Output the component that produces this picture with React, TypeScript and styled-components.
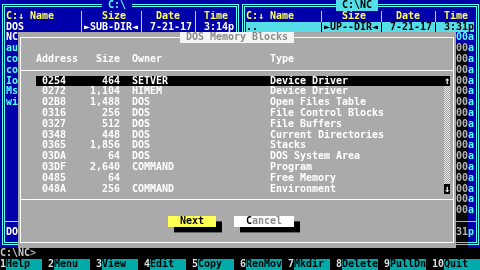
import styled, { createGlobalStyle, css } from 'styled-components'

// text-mode palette
const BLUE = '#0000aa'
const CYAN = '#55ffff'
const WHITE = '#ffffff'
const YELLOW = '#ffff55'
const GRAY = '#aaaaaa'
const CURSOR = '#55dde8'
const TEAL = '#00aaaa'

const GlobalStyle = createGlobalStyle`
  html, body {
    margin: 0;
    padding: 0;
    background: #000;
  }
  #root {
    width: 480px;
    height: 270px;
    overflow: hidden;
  }
`

const Screen = styled.main`
  position: relative;
  width: 480px;
  height: 270px;
  display: grid;
  grid-template-rows: 248.4px 10.8px 10.8px;
  background: #000;
  color: #c8c8c8;
  font: bold 10px/10.8px "DejaVu Sans Mono", "Liberation Mono", monospace;
  letter-spacing: -0.02px;
  white-space: pre;
`

const Panels = styled.div`
  display: flex;
`

const Panel = styled.section`
  position: relative;
  width: 240px;
  box-sizing: border-box;
  padding: 0 6px 10.8px;
  display: flex;
  flex-direction: column;
  background: ${BLUE};
  color: ${CYAN};

  &::before {
    content: '';
    position: absolute;
    inset: 3.9px 1.5px;
    border: 3px double ${CYAN};
  }
`

const PanelTitle = styled.div<{ $active?: boolean }>`
  position: relative;
  align-self: center;
  margin-right: 6px;
  height: 10.8px;
  background: ${p => (p.$active ? CURSOR : BLUE)};
  color: ${p => (p.$active ? '#000' : CYAN)};
`

const dividers = (c: string) =>
  [75, 135, 189].map(x => `linear-gradient(${c}, ${c}) ${x}px 0 / 1px 100% no-repeat`).join(', ')

const FileList = styled.div`
  background: ${dividers(CYAN)};
`

const FileRow = styled.div<{ $cursor?: boolean; $dir?: boolean }>`
  display: grid;
  grid-template-columns: 72px 54px 48px 36px;
  column-gap: 6px;
  height: 10.8px;
  color: ${p => (p.$dir ? WHITE : CYAN)};

  ${p =>
    p.$cursor &&
    css`
      color: #000;
      background: ${dividers('#000')}, ${CURSOR};
    `}
`

const HeadRow = styled(FileRow)`
  color: ${YELLOW};
`

const Cell = styled.span<{ $right?: boolean }>`
  overflow: hidden;
  text-align: ${p => (p.$right ? 'right' : 'left')};
`

const PanelSep = styled.div`
  height: 10.8px;
  margin: 0 -2px;
  background: linear-gradient(${CYAN}, ${CYAN}) 0 5px / 100% 1px no-repeat;
`

const CommandLine = styled.div`
  color: #c8c8c8;
`

const KeyBar = styled.div`
  display: flex;
`

const Key = styled.div<{ $last?: boolean }>`
  display: flex;
  width: 48px;
  box-sizing: border-box;
  padding-right: ${p => (p.$last ? 0 : 6)}px;
`

const KeyNum = styled.span`
  flex: 1;
  color: #dddddd;
`

const KeyLabel = styled.span`
  width: 36px;
  background: ${TEAL};
  color: #000;
`

// dialog box
const DialogShade = styled.div`
  position: absolute;
  left: 30px;
  top: 43.2px;
  width: 438px;
  height: 216px;
  backdrop-filter: grayscale(1) brightness(0.8);
`

const Dialog = styled.div`
  position: absolute;
  left: 18px;
  top: 32.4px;
  width: 438px;
  height: 216px;
  display: flex;
  flex-direction: column;
  background: ${GRAY};
  color: ${WHITE};

  &::before {
    content: '';
    position: absolute;
    inset: 5px 2px;
    border: 1px solid ${WHITE};
  }
`

const DialogTitleRow = styled.div`
  position: relative;
  height: 10.8px;
  display: flex;
  justify-content: center;
`

const DialogTitle = styled.span`
  background: #f4f4f4;
  color: #8c8c8c;
`

const Blank = styled.div`
  height: 10.8px;
`

const HLine = styled.div`
  height: 10.8px;
  margin: 0 2px;
  background: linear-gradient(${WHITE}, ${WHITE}) 0 5px / 100% 1px no-repeat;
`

const ListGrid = styled.div<{ $selected?: boolean }>`
  display: grid;
  grid-template-columns: 30px 54px 12px 138px 174px;
  height: 10.8px;
  background: ${p => (p.$selected ? '#000' : 'transparent')};
`

const HeadGrid = styled.div`
  display: grid;
  grid-template-columns: 42px 42px 12px 138px 174px;
  height: 10.8px;
  margin-left: 18px;
`

const Addr = styled.span`
  padding-left: 6px;
  overflow: hidden;
`

const ListArea = styled.div`
  display: flex;
  padding-left: 18px;
`

const ListBody = styled.div`
  width: 408px;
`

const ScrollBar = styled.div`
  width: 6px;
  display: flex;
  flex-direction: column;
`

const ScrollArrow = styled.div`
  height: 10.8px;
  background: #000;
  color: ${WHITE};
  text-align: center;
`

const ScrollTrack = styled.div`
  flex: 1;
  background: repeating-conic-gradient(#eeeeee 0 25%, #9a9a9a 0 50%) 0 0 / 2px 2px;
`

const ButtonRow = styled.div`
  display: flex;
  gap: 18px;
  height: 10.8px;
  padding-left: 150px;
`

const Button = styled.div<{ $primary?: boolean }>`
  width: ${p => (p.$primary ? 48 : 60)}px;
  text-align: center;
  background: ${p => (p.$primary ? YELLOW : WHITE)};
  color: #000;
  box-shadow: 6px 5.4px 0 #000;
`

const Dim = styled.span`
  color: #8a8a8a;
`

type FileEntry = { name?: string; size?: string; date?: string; time?: string; dir?: boolean }

// only what shows around the dialog is filled in
const leftFiles: FileEntry[] = [
  { name: 'DOS', size: '►SUB-DIR◄', date: '7-21-17', time: '3:14p', dir: true },
  { name: 'NC', dir: true },
  { name: 'au' },
  { name: 'co' },
  { name: 'co' },
  { name: 'Io' },
  { name: 'Ms' },
  { name: 'wi' },
]

const rightFiles: FileEntry[] = [
  { name: '..', size: '►UP--DIR◄', date: '7-21-17', time: '3:31p' },
  ...Array.from({ length: 17 }, () => ({ time: '00a' })),
]

const blocks = [
  ['0254', '464', 'SETVER', 'Device Driver'],
  ['0272', '1,104', 'HIMEM', 'Device Driver'],
  ['02B8', '1,488', 'DOS', 'Open Files Table'],
  ['0316', '256', 'DOS', 'File Control Blocks'],
  ['0327', '512', 'DOS', 'File Buffers'],
  ['0348', '448', 'DOS', 'Current Directories'],
  ['0365', '1,856', 'DOS', 'Stacks'],
  ['03DA', '64', 'DOS', 'DOS System Area'],
  ['03DF', '2,640', 'COMMAND', 'Program'],
  ['0485', '64', '', 'Free Memory'],
  ['048A', '256', 'COMMAND', 'Environment'],
]

const keys = ['Help', 'Menu', 'View', 'Edit', 'Copy', 'RenMov', 'Mkdir', 'Delete', 'PullDn', 'Quit']

const FilePanel = ({ title, files, active }: { title: string; files: FileEntry[]; active?: boolean }) => {
  const rows = Array.from({ length: 18 }, (_, i) => files[i])
  const current = files[0]
  return (
    <Panel>
      <PanelTitle $active={active}>{` ${title} `}</PanelTitle>
      <FileList>
        <HeadRow>
          <Cell>C:↓ Name</Cell>
          <Cell>   Size</Cell>
          <Cell>  Date</Cell>
          <Cell> Time</Cell>
        </HeadRow>
        {rows.map((f, i) => (
          <FileRow key={i} $dir={f?.dir} $cursor={active && i === 0}>
            <Cell>{f?.name}</Cell>
            <Cell $right>{f?.size}</Cell>
            <Cell $right>{f?.date}</Cell>
            <Cell $right>{f?.time}</Cell>
          </FileRow>
        ))}
      </FileList>
      <PanelSep />
      <FileRow $dir={current.dir}>
        <Cell>{current.name}</Cell>
        <Cell $right>{current.size}</Cell>
        <Cell $right>{current.date}</Cell>
        <Cell $right>{current.time}</Cell>
      </FileRow>
    </Panel>
  )
}

export default function App() {
  return (
    <Screen>
      <GlobalStyle />
      <Panels>
        <FilePanel title="C:\" files={leftFiles} />
        <FilePanel title="C:\NC" files={rightFiles} active />
      </Panels>
      <CommandLine>C:\NC&gt;</CommandLine>
      <KeyBar>
        {keys.map((k, i) => (
          <Key key={k} $last={i === keys.length - 1}>
            <KeyNum>{i + 1}</KeyNum>
            <KeyLabel>{k}</KeyLabel>
          </Key>
        ))}
      </KeyBar>

      <DialogShade />
      <Dialog>
        <DialogTitleRow>
          <DialogTitle> DOS Memory Blocks </DialogTitle>
        </DialogTitleRow>
        <Blank />
        <HeadGrid>
          <Cell>Address</Cell>
          <Cell $right>Size</Cell>
          <span />
          <Cell>Owner</Cell>
          <Cell>Type</Cell>
        </HeadGrid>
        <HLine />
        <ListArea>
          <ListBody>
            {blocks.map(([addr, size, owner, type], i) => (
              <ListGrid key={addr} $selected={i === 0}>
                <Addr>{addr}</Addr>
                <Cell $right>{size}</Cell>
                <span />
                <Cell>{owner}</Cell>
                <Cell>{type}</Cell>
              </ListGrid>
            ))}
          </ListBody>
          <ScrollBar>
            <ScrollArrow>↑</ScrollArrow>
            <ScrollTrack />
            <ScrollArrow>↓</ScrollArrow>
          </ScrollBar>
        </ListArea>
        <HLine />
        <Blank />
        <ButtonRow>
          <Button $primary>Next</Button>
          <Button>
            C<Dim>ancel</Dim>
          </Button>
        </ButtonRow>
      </Dialog>
    </Screen>
  )
}
